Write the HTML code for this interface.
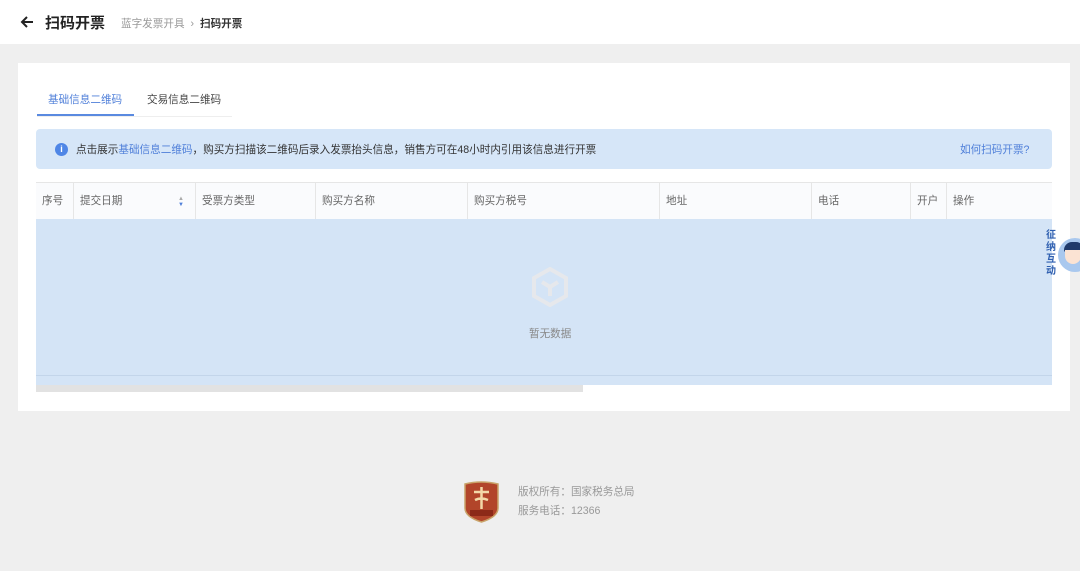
<!DOCTYPE html>
<html><head><meta charset="utf-8"><style>
*{margin:0;padding:0;box-sizing:border-box}
body{width:1080px;height:571px;background:#efefef;font-family:"Liberation Sans","Noto Sans CJK SC",sans-serif;position:relative;overflow:hidden;color:#333}
.top{position:absolute;left:0;top:0;width:1080px;height:44px;background:#fff}
.abs{position:absolute;white-space:nowrap}
.card{position:absolute;left:18px;top:63px;width:1052px;height:348px;background:#fff}
.th{position:absolute;top:183px;height:36px;line-height:36px;font-size:10.6px;color:#666;padding-left:6px;border-left:1px solid #e6e6e6;overflow:hidden}
</style></head><body>
<div class="top"></div>
<svg class="abs" style="left:20px;top:15px" width="14" height="14" viewBox="0 0 14 14"><path d="M13 7H2M7 2L2 7l5 5" stroke="#222" stroke-width="2" fill="none"/></svg>
<div class="abs" style="left:45px;top:12px;font-size:15px;font-weight:bold;color:#222">扫码开票</div>
<div class="abs" style="left:121px;top:16px;font-size:10.6px;color:#999">蓝字发票开具 <span style="margin:0 3px">›</span> <b style="color:#333">扫码开票</b></div>
<div class="card"></div>
<div class="abs" style="left:48px;top:92px;font-size:10.6px;color:#4f7fd9">基础信息二维码</div>
<div class="abs" style="left:147px;top:92px;font-size:10.6px;color:#444">交易信息二维码</div>
<div class="abs" style="left:37px;top:116px;width:195px;height:1px;background:#eee"></div>
<div class="abs" style="left:37px;top:114px;width:97px;height:2px;background:#5a8ae0"></div>
<div class="abs" style="left:36px;top:129px;width:1016px;height:40px;background:#d6e6f8;border-radius:4px"></div>
<div class="abs" style="left:55px;top:143px;width:13px;height:13px;border-radius:50%;background:#4f86e6;color:#fff;font-size:9px;text-align:center;line-height:13px;font-weight:bold">i</div>
<div class="abs" style="left:76px;top:142px;font-size:10.6px;color:#333">点击展示<span style="color:#4f7fd9">基础信息二维码</span>，购买方扫描该二维码后录入发票抬头信息，销售方可在48小时内引用该信息进行开票</div>
<div class="abs" style="left:960px;top:142px;font-size:10.6px;color:#4f7fd9">如何扫码开票?</div>
<div class="abs" style="left:36px;top:182px;width:1016px;height:37px;background:#fafbfd;border-top:1px solid #e6e6e6"></div>
<div class="th" style="left:36px;width:37px;border-left:none">序号</div>
<div class="th" style="left:73px;width:122px">提交日期<span style="position:absolute;left:104px;font-size:6px;line-height:6px;top:13px;color:#aaa">▲<br><span style="color:#4f7fd9">▼</span></span></div>
<div class="th" style="left:195px;width:120px">受票方类型</div>
<div class="th" style="left:315px;width:152px">购买方名称</div>
<div class="th" style="left:467px;width:192px">购买方税号</div>
<div class="th" style="left:659px;width:152px">地址</div>
<div class="th" style="left:811px;width:99px">电话</div>
<div class="th" style="left:910px;width:36px">开户银行</div>
<div class="th" style="left:946px;width:106px;background:#fafbfd">操作</div>
<div class="abs" style="left:36px;top:219px;width:1016px;height:166px;background:#d4e4f6"></div>
<div class="abs" style="left:36px;top:375px;width:1016px;height:1px;background:#c3d5ea"></div>
<div class="abs" style="left:36px;top:385px;width:547px;height:7px;background:#e2e2e2"></div>
<svg class="abs" style="left:531px;top:267px" width="38" height="40" viewBox="0 0 38 40"><path d="M19 2L35 11v18L19 38 3 29V11z" fill="none" stroke="#e6e8ec" stroke-width="4"/><path d="M11 15l8 5 8-5M19 20v9" stroke="#e6e8ec" stroke-width="4" fill="none"/></svg>
<div class="abs" style="left:529px;top:326px;font-size:10.6px;color:#888">暂无数据</div>
<div class="abs" style="left:1046px;top:230px;width:40px;height:46px">
<div style="position:absolute;left:12px;top:8px;width:34px;height:34px;border-radius:50%;background:#a9c8ee"></div>
<div style="position:absolute;left:18px;top:12px;width:20px;height:10px;background:#1f3a6b;border-radius:8px 8px 2px 2px"></div>
<div style="position:absolute;left:19px;top:20px;width:16px;height:14px;background:#fbe3d3;border-radius:0 0 8px 8px"></div>
<div style="position:absolute;left:0;top:0;font-size:10px;line-height:12px;color:#2f5fb0;font-weight:bold;width:12px">征<br>纳<br>互<br>动</div>
</div>
<svg class="abs" style="left:463px;top:480px" width="37" height="43" viewBox="0 0 37 43"><path d="M2 4Q18 0 35 4V28Q35 37 18.5 42 2 37 2 28Z" fill="#b2452a" stroke="#c9a46a" stroke-width="1.5"/><path d="M11 12h15M18.5 7v22M12 20q6-3 13 0" stroke="#f3d9a8" stroke-width="2.5" fill="none"/><rect x="7" y="30" width="23" height="6" fill="#8c2a18"/></svg>
<div class="abs" style="left:518px;top:483px;font-size:10.6px;color:#999;line-height:19px">版权所有：国家税务总局<br>服务电话：12366</div>
</body></html>
